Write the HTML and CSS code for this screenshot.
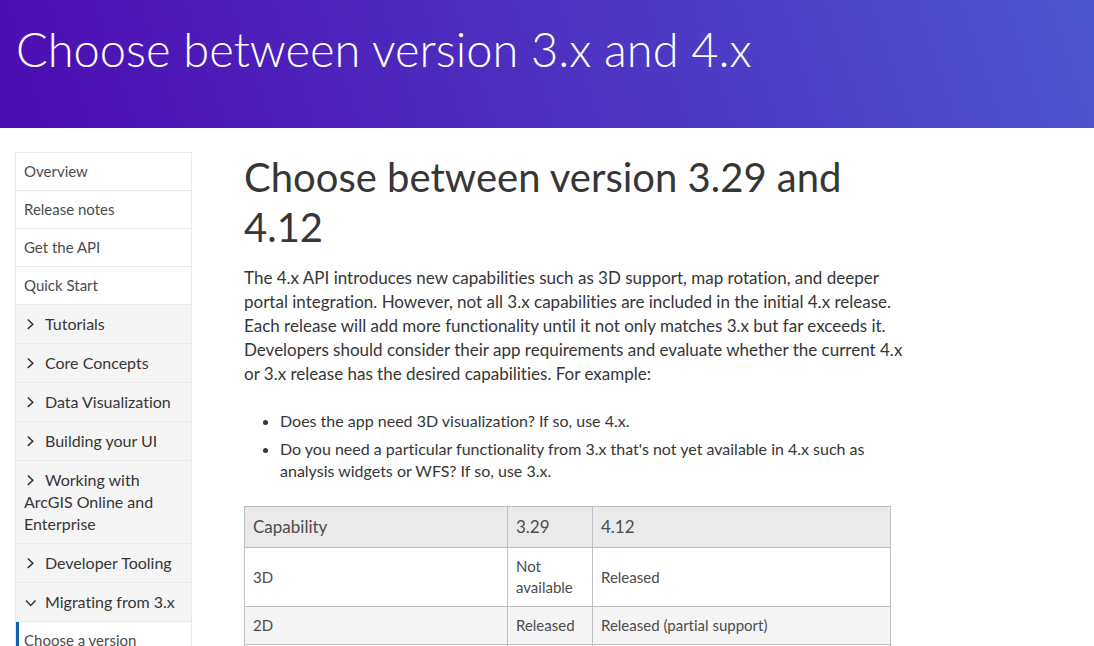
FILE: index.html
```html
<!DOCTYPE html>
<html lang="en">
<head>
<meta charset="utf-8">
<title>Choose between version 3.x and 4.x</title>
<link rel="stylesheet" href="styles.css">
</head>
<body>
<header class="banner">
  <h1 class="banner-title">Choose between version 3.x and 4.x</h1>
</header>
<div class="layout">
  <nav class="side-nav" aria-label="Guide">
    <a class="side-link" href="#">Overview</a>
    <a class="side-link" href="#">Release notes</a>
    <a class="side-link" href="#">Get the API</a>
    <a class="side-link" href="#">Quick Start</a>
    <button class="side-group" type="button" aria-expanded="false"><svg class="chevron" viewBox="0 0 13 13" aria-hidden="true"><path d="M3.800 1.500l5 4.700-5 4.700"/></svg>Tutorials</button>
    <button class="side-group" type="button" aria-expanded="false"><svg class="chevron" viewBox="0 0 13 13" aria-hidden="true"><path d="M3.800 1.500l5 4.700-5 4.700"/></svg>Core Concepts</button>
    <button class="side-group" type="button" aria-expanded="false"><svg class="chevron" viewBox="0 0 13 13" aria-hidden="true"><path d="M3.800 1.500l5 4.700-5 4.700"/></svg>Data Visualization</button>
    <button class="side-group" type="button" aria-expanded="false"><svg class="chevron" viewBox="0 0 13 13" aria-hidden="true"><path d="M3.800 1.500l5 4.700-5 4.700"/></svg>Building your UI</button>
    <button class="side-group" type="button" aria-expanded="false"><svg class="chevron" viewBox="0 0 13 13" aria-hidden="true"><path d="M3.800 1.500l5 4.700-5 4.700"/></svg>Working with ArcGIS Online and Enterprise</button>
    <button class="side-group" type="button" aria-expanded="false"><svg class="chevron" viewBox="0 0 13 13" aria-hidden="true"><path d="M3.800 1.500l5 4.700-5 4.700"/></svg>Developer Tooling</button>
    <button class="side-group" type="button" aria-expanded="true"><svg class="chevron" viewBox="0 0 13 13" aria-hidden="true"><path d="M2 4.500l4.700 4.900L11.500 4.500"/></svg>Migrating from 3.x</button>
    <a class="side-link side-link-active" href="#" aria-current="page">Choose a version</a>
  </nav>
  <main class="article">
    <h2 class="article-title">Choose between version 3.29 and 4.12</h2>
    <p class="intro">The 4.x API introduces new capabilities such as 3D support, map rotation, and deeper<br>portal integration. However, not all 3.x capabilities are included in the initial 4.x release.<br>Each release will add more functionality until it not only matches 3.x but far exceeds it.<br>Developers should consider their app requirements and evaluate whether the current 4.x<br>or 3.x release has the desired capabilities. For example:</p>
    <ul class="questions">
      <li>Does the app need 3D visualization? If so, use 4.x.</li>
      <li>Do you need a particular functionality from 3.x that's not yet available in 4.x such as<br>analysis widgets or WFS? If so, use 3.x.</li>
    </ul>
    <table class="capabilities">
      <colgroup><col class="col-name"><col class="col-old"><col></colgroup>
      <thead>
        <tr><th scope="col">Capability</th><th scope="col">3.29</th><th scope="col">4.12</th></tr>
      </thead>
      <tbody>
        <tr><td>3D</td><td>Not available</td><td>Released</td></tr>
        <tr><td>2D</td><td>Released</td><td>Released (partial support)</td></tr>
        <tr><td></td><td></td><td></td></tr>
      </tbody>
    </table>
  </main>
</div>
</body>
</html>
```
FILE: styles.css
```css
* { box-sizing: border-box; }
body {
  margin: 0;
  background: #fff;
  color: #363636;
  font-family: Lato, "Noto Sans", sans-serif;
  font-size: 17px;
  font-variant-ligatures: none;
  line-height: 24px;
}
.banner {
  padding: 19px 16px 49px;
  background: linear-gradient(72deg, #4c0cb2, #4e55cf);
}
.banner-title {
  margin: 0;
  color: #fff;
  font-size: 47px;
  font-weight: 300;
  line-height: 60px;
}
.layout {
  display: grid;
  grid-template-columns: 177fr 647fr 136fr;
  column-gap: 52px;
  align-items: start;
  padding: 24px 15px 0;
}
.article { min-width: 0; }
.side-nav {
  display: flex;
  flex-direction: column;
  border: 1px solid #eaeaea;
  border-bottom: 0;
}
.side-link {
  padding: 8px;
  border-bottom: 1px solid #eaeaea;
  color: #4c4c4c;
  font-size: 15px;
  line-height: 21px;
  text-decoration: none;
}
.side-link-active {
  padding-left: 5px;
  border-left: 3px solid #0d62b0;
}
.side-group {
  padding: 8px;
  border: 0;
  border-bottom: 1px solid #eaeaea;
  background: #f5f5f5;
  color: #363636;
  font: inherit;
  font-size: 16px;
  font-variant-ligatures: none;
  line-height: 22px;
  text-align: left;
}
.chevron {
  width: 13px;
  height: 13px;
  margin-right: 8px;
  vertical-align: -1px;
  fill: none;
  stroke: #323232;
  stroke-width: 1.500;
}
.article-title {
  margin: 0 0 14px;
  font-size: 40px;
  font-weight: 400;
  line-height: 50px;
}
.intro {
  margin: 0 0 24px;
  white-space: nowrap;
}
.questions {
  margin: 0 0 24px;
  padding-left: 36px;
  font-size: 16px;
  line-height: 22px;
}
.questions li + li { margin-top: 6px; }
.capabilities {
  width: 100%;
  table-layout: fixed;
  border-collapse: collapse;
  color: #4c4c4c;
  font-size: 15px;
  line-height: 21px;
}
.col-name { width: 263px; }
.col-old { width: 85px; }
.capabilities th,
.capabilities td {
  padding: 8px;
  border: 1px solid #bfbfbf;
  text-align: left;
}
.capabilities th {
  background: #eaeaea;
  font-size: 17px;
  font-weight: 400;
  line-height: 24px;
}
.capabilities tbody tr:nth-child(even) { background: #f5f5f5; }
```
